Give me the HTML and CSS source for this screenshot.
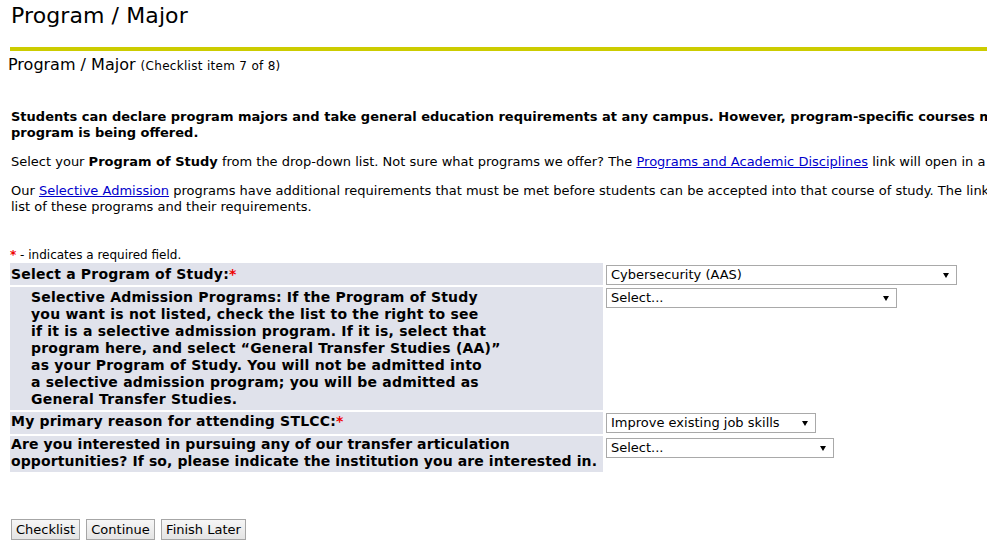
FILE: index.html
```html
<!DOCTYPE html>
<html lang="en">
<head>
<meta charset="utf-8">
<title>Program / Major</title>
<link rel="stylesheet" href="styles.css">
</head>
<body>
<div class="page">
  <h1 class="title">Program / Major</h1>
  <div class="rule"></div>
  <h2 class="subtitle">Program / Major <span class="step">(Checklist item 7 of 8)</span></h2>

  <p class="lead">Students can declare program majors and take general education requirements at any campus. However, program-specific courses may only be taken at the campus where the<br>program is being offered.</p>
  <p>Select your <b>Program of Study</b> from the drop-down list. Not sure what programs we offer? The <a href="#">Programs and Academic Disciplines</a> link will open in a new window.</p>
  <p>Our <a href="#">Selective Admission</a> programs have additional requirements that must be met before students can be accepted into that course of study. The link below will provide a<br>list of these programs and their requirements.</p>

  <div class="req-note"><span class="star">*</span> - indicates a required field.</div>

  <form class="form-grid">
    <label class="lbl lbl-1">Select a Program of Study:<span class="star">*</span></label>
    <div class="ctl"><span class="sel"><select class="w350"><option>Cybersecurity (AAS)</option></select></span></div>

    <label class="lbl lbl-2">Selective Admission Programs: If the Program of Study<br>you want is not listed, check the list to the right to see<br>if it is a selective admission program. If it is, select that<br>program here, and select “General Transfer Studies (AA)”<br>as your Program of Study. You will not be admitted into<br>a selective admission program; you will be admitted as<br>General Transfer Studies.</label>
    <div class="ctl ctl-2"><span class="sel"><select class="w290"><option>Select...</option></select></span></div>

    <label class="lbl lbl-3">My primary reason for attending STLCC:<span class="star">*</span></label>
    <div class="ctl ctl-3"><span class="sel"><select class="w210"><option>Improve existing job skills</option></select></span></div>

    <label class="lbl lbl-4">Are you interested in pursuing any of our transfer articulation<br>opportunities? If so, please indicate the institution you are interested in.</label>
    <div class="ctl ctl-4"><span class="sel"><select class="w227"><option>Select...</option></select></span></div>
  </form>

  <div class="buttons">
    <button type="button" class="btn btn-a">Checklist</button>
    <button type="button" class="btn btn-a">Continue</button>
    <button type="button" class="btn btn-b">Finish Later</button>
  </div>
</div>
</body>
</html>
```

FILE: styles.css
```css
html {
  overflow: hidden;
  background: #fff;
}
body {
  margin: 0;
  font-family: "DejaVu Sans", Verdana, sans-serif;
  color: #000;
}
.page {
  width: 1400px;
  padding-left: 10px;
}
.title {
  margin: 2px 0 0 1px;
  font-size: 22px;
  font-weight: normal;
  line-height: 27px;
  letter-spacing: 0.1px;
}
.rule {
  height: 4px;
  margin-top: 18px;
  background: #cccc00;
}
.subtitle {
  margin: 4px 0 0 -2px;
  font-size: 16px;
  font-weight: normal;
  line-height: 19px;
  height: 19px;
}
.step {
  font-size: 12px;
  line-height: 12px;
  letter-spacing: 0.3px;
}
p {
  margin: 13px 0 0 1px;
  font-size: 13px;
  line-height: 16px;
}
p.lead {
  margin-top: 35px;
  font-weight: bold;
}
a {
  color: #0000cc;
}
.req-note {
  margin: 33px 0 0 0;
  font-size: 12px;
  line-height: 14px;
  height: 14px;
}
.star {
  color: #ee0000;
  font-weight: bold;
}
.form-grid {
  display: grid;
  grid-template-columns: 593px 400px;
  column-gap: 3px;
  row-gap: 2px;
  margin-top: 1px;
  align-items: start;
}
.lbl {
  display: block;
  align-self: stretch;
  background: #e0e2eb;
  font-size: 14px;
  font-weight: bold;
  line-height: 17px;
  letter-spacing: 0.2px;
  white-space: nowrap;
  padding: 3px 0 2px 1px;
}
.lbl-2 {
  padding: 2px 0 2px 21px;
}
.lbl-3 {
  padding: 1px 0 4px 1px;
}
.lbl-4 {
  padding: 0 0 2px 1px;
  letter-spacing: 0.1px;
}
.ctl {
  padding-top: 1px;
}
.ctl-2,
.ctl-3 {
  padding-top: 0;
}
.sel {
  position: relative;
  display: inline-block;
}
.sel::after {
  content: "";
  position: absolute;
  right: 8px;
  top: 8px;
  border-left: 3px solid transparent;
  border-right: 3px solid transparent;
  border-top: 5px solid #000;
  pointer-events: none;
}
select {
  appearance: none;
  -webkit-appearance: none;
  display: block;
  height: 20px;
  margin: 0;
  padding: 0 0 0 4px;
  border: 1px solid #a9a9a9;
  border-radius: 0;
  background: #fff;
  font-family: "DejaVu Sans", Verdana, sans-serif;
  font-size: 13px;
  color: #000;
}
.w350 { width: 351px; }
.w290 { width: 291px; }
.w210 { width: 210px; }
.w227 { width: 228px; }
.buttons {
  display: flex;
  gap: 6px;
  margin-top: 47px;
  padding-left: 1px;
}
.btn {
  height: 21px;
  padding: 0;
  border: 1px solid #a6a6a6;
  border-radius: 0;
  background: linear-gradient(#f6f6f6, #e4e4e4);
  font-family: "DejaVu Sans", Verdana, sans-serif;
  font-size: 13px;
  color: #000;
}
.btn-a { width: 69px; }
.btn-b { width: 85px; }
```
